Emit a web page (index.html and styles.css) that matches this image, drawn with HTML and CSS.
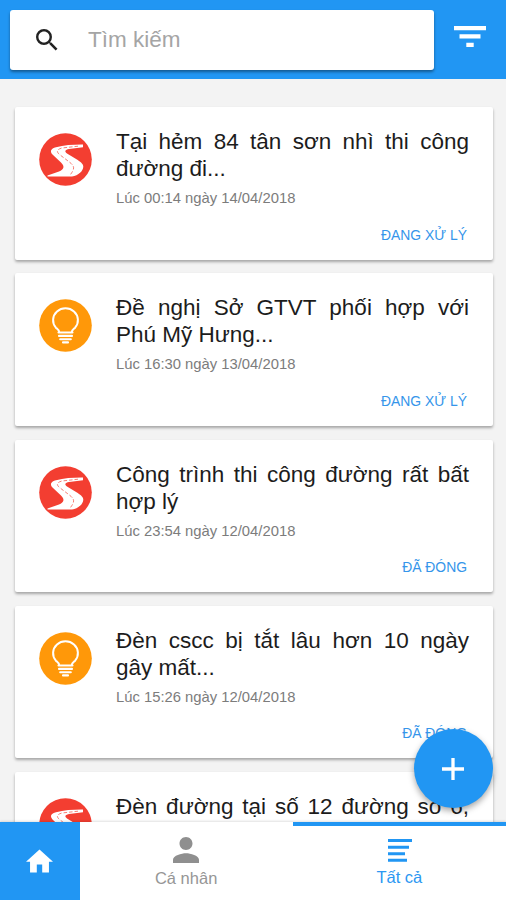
FILE: index.html
```html
<!DOCTYPE html>
<html lang="vi">
<head>
<meta charset="utf-8">
<title>Tất cả</title>
<link rel="stylesheet" href="styles.css">
</head>
<body>
<svg class="defs" width="0" height="0">
  <symbol id="road" viewBox="0 0 53 53">
    <circle cx="26.5" cy="26.5" r="26.3" fill="#f33e31"/>
    <path d="M44 11.600C35 11.500 25 12.200 17 14.200C11.500 15.600 10.800 18.500 13.500 21.500L22 29.500C26 33.500 25 36.500 20 38.500L8.500 42.500V43.600H33C39.500 42.500 44.300 38 44.300 33.500C44 30.500 41 28.500 37.500 26.300L28 20.500C25.300 18.500 26 16.800 30 16L44 14.200Z" fill="#fff"/>
    <path d="M39 13.200L23 15C18 16.300 17 18.500 20.500 21.500L31 29.500C36 33.500 35.500 36 31.500 41.500" fill="none" stroke="#f33e31" stroke-opacity=".75" stroke-width=".9" stroke-dasharray="3.500 2"/>
  </symbol>
  <symbol id="bulb" viewBox="0 0 53 53">
    <circle cx="26.5" cy="26.5" r="26.300" fill="#ff9809"/>
    <path d="M20.200 33C20 31 18.500 30.200 16.900 28.700A12.400 11.900 0 1 1 36.100 28.700C34.500 30.200 33 31 32.800 33" fill="none" stroke="#fff" stroke-width="2"/>
    <path d="M19.500 33.500H33.500M20 36.900H33M21.200 40.200H31.800M24 43.400H29" stroke="#fff" stroke-width="2.100" stroke-linecap="round"/>
  </symbol>
</svg>
<div class="app">
  <header class="topbar">
    <div class="search">
      <svg class="search-icon" viewBox="3 3 17.500 17.500"><path fill="#222" d="M15.500 14h-.79l-.28-.27A6.471 6.471 0 0 0 16 9.500 6.500 6.500 0 1 0 9.500 16c1.610 0 3.090-.59 4.230-1.570l.27.28v.79l5 4.990L20.490 19l-4.990-5zm-6 0C7.010 14 5 11.990 5 9.500S7.010 5 9.500 5 14 7.010 14 9.500 11.990 14 9.500 14z"/></svg>
      <span class="placeholder">Tìm kiếm</span>
    </div>
    <svg class="filter" viewBox="0 0 32 22"><path fill="#fff" d="M0 0H32V4.300H0ZM5.500 8.300H26.500V12.600H5.500ZM12.300 16.700H19.700V21H12.300Z"/></svg>
  </header>
  <main class="list">
    <article class="card">
      <svg class="badge"><use href="#road"/></svg>
      <div class="body">
        <h2>Tại hẻm 84 tân sơn nhì thi công đường đi...</h2>
        <p class="date">Lúc 00:14 ngày 14/04/2018</p>
        <p class="status">ĐANG XỬ LÝ</p>
      </div>
    </article>
    <article class="card">
      <svg class="badge"><use href="#bulb"/></svg>
      <div class="body">
        <h2>Đề nghị Sở GTVT phối hợp với Phú Mỹ Hưng...</h2>
        <p class="date">Lúc 16:30 ngày 13/04/2018</p>
        <p class="status">ĐANG XỬ LÝ</p>
      </div>
    </article>
    <article class="card">
      <svg class="badge"><use href="#road"/></svg>
      <div class="body">
        <h2>Công trình thi công đường rất bất hợp lý</h2>
        <p class="date">Lúc 23:54 ngày 12/04/2018</p>
        <p class="status">ĐÃ ĐÓNG</p>
      </div>
    </article>
    <article class="card">
      <svg class="badge"><use href="#bulb"/></svg>
      <div class="body">
        <h2>Đèn cscc bị tắt lâu hơn 10 ngày gây mất...</h2>
        <p class="date">Lúc 15:26 ngày 12/04/2018</p>
        <p class="status">ĐÃ ĐÓNG</p>
      </div>
    </article>
    <article class="card">
      <svg class="badge"><use href="#road"/></svg>
      <div class="body">
        <h2 class="single">Đèn đường tại số 12 đường số 6,</h2>
      </div>
    </article>
  </main>
  <div class="fab"><svg viewBox="0 0 22 22"><path d="M11 0V22M0 11H22" stroke="#fff" stroke-width="3.300"/></svg></div>
  <nav class="tabs">
    <div class="home"><svg viewBox="2 3 20 17"><path fill="#fff" d="M10 20v-6h4v6h5v-8h3L12 3 2 12h3v8z"/></svg></div>
    <div class="tab">
      <svg class="person" viewBox="4 4 16 16"><path fill="#8f8f8f" d="M12 12c2.210 0 4-1.790 4-4s-1.790-4-4-4-4 1.790-4 4 1.790 4 4 4zm0 2c-2.670 0-8 1.340-8 4v2h16v-2c0-2.660-5.330-4-8-4z"/></svg>
      <span>Cá nhân</span>
    </div>
    <div class="tab active">
      <svg class="lines" viewBox="0 0 24 23"><path d="M0 1.600H24M0 8.200H21M0 14.700H17M0 21.200H19" stroke="#2196f3" stroke-width="3"/></svg>
      <span>Tất cả</span>
    </div>
  </nav>
</div>
</body>
</html>
```
FILE: styles.css
```css
* { box-sizing: border-box; margin: 0; padding: 0; }
body { font-family: "Liberation Sans", Arial, sans-serif; background: #f3f3f3; }
.defs { position: absolute; }
.app { position: relative; width: 506px; height: 900px; display: flex; flex-direction: column; overflow: hidden; }
.topbar { height: 79px; flex: none; background: #2196f3; display: flex; align-items: flex-start; padding: 10px 20px 0 10px; }
.search { width: 424px; height: 59.500px; background: #fff; border-radius: 3px; display: flex; align-items: center; padding-left: 26px; box-shadow: 0 2px 3px rgba(0,0,0,.4); }
.search-icon { width: 21.500px; height: 21.500px; }
.placeholder { margin-left: 30.500px; font-size: 22.500px; color: #a5a5a5; }
.filter { width: 32px; height: 22px; margin: 16px 0 0 20px; }
.list { flex: 1; min-height: 0; overflow: hidden; padding: 28px 13px 0 14.500px; display: flex; flex-direction: column; gap: 13.800px; }
.card { flex: none; height: 152.500px; background: #fff; border-radius: 2px; box-shadow: 0 2px 3px rgba(0,0,0,.32); display: flex; padding: 21px 24px 0; }
.badge { width: 53px; height: 53px; margin-top: 5px; flex: none; }
.body { flex: 1; margin-left: 24.500px; }
h2 { font-weight: 400; font-size: 22.500px; line-height: 27px; color: #1c1c1c; text-align: justify; }
.single { text-align-last: justify; }
.date { font-size: 14.800px; line-height: 18px; margin-top: 7px; color: #7c7c7c; }
.status { font-size: 13.900px; line-height: 16px; margin-top: 19.500px; text-align: right; color: #3595ea; padding-right: 2px; }
.fab { position: absolute; left: 414px; top: 729px; width: 79px; height: 79px; border-radius: 50%; background: #2196f3; display: flex; align-items: center; justify-content: center; padding-right: 1px; box-shadow: 0 3px 6px rgba(0,0,0,.35); }
.fab svg { width: 22px; height: 22px; }
.tabs { height: 78px; flex: none; display: flex; background: #fff; box-shadow: 0 -1px 2px rgba(0,0,0,.12); position: relative; }
.home { width: 79.500px; background: #2196f3; display: flex; align-items: center; justify-content: center; }
.home svg { width: 27px; height: 26px; }
.tab { flex: 1; display: flex; flex-direction: column; align-items: center; padding-top: 15px; border-top: 0 solid #2196f3; font-size: 16.500px; color: #969696; }
.tab span { margin-top: 5px; line-height: 20px; }
.person { width: 26px; height: 26px; }
.active { border-top-width: 4px; padding-top: 12.500px; color: #2c98f2; }
.lines { width: 24px; height: 23px; }
.active .lines { margin-left: 1px; }
```
